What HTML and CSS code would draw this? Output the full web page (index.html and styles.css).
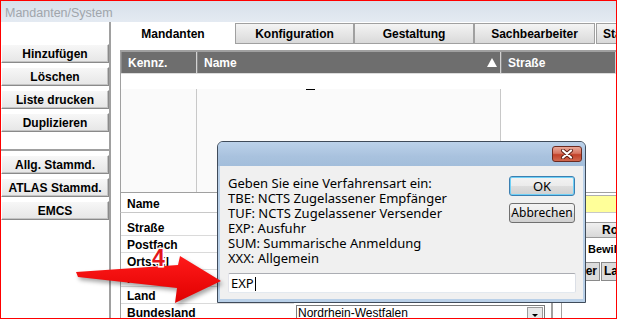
FILE: index.html
```html
<!DOCTYPE html>
<html lang="de">
  <head>
    <meta charset="UTF-8" />
    <title>Mandanten/System</title>
    <link rel="stylesheet" href="styles.css">
  </head>
  <body>
    <div class="window">
      <div class="titlebar">Mandanten/System</div>
      <div class="main">
        <div class="sidebar">
          <div class="side-btn">Hinzufügen</div>
          <div class="side-btn">Löschen</div>
          <div class="side-btn">Liste drucken</div>
          <div class="side-btn">Duplizieren</div>
          <div class="side-sep"></div>
          <div class="side-btn">Allg. Stammd.</div>
          <div class="side-btn">ATLAS Stammd.</div>
          <div class="side-btn">EMCS</div>
        </div>
        <div class="content">
          <div class="tabs">
            <div class="tab active">Mandanten</div>
            <div class="tab w119">Konfiguration</div>
            <div class="tab w120">Gestaltung</div>
            <div class="tab w121">Sachbearbeiter</div>
            <div class="tab tab-cut">Stammdaten</div>
          </div>
          <div class="page">
            <div class="grid">
              <div class="grid-head">
                <div class="gh">Kennz.</div>
                <div class="gh">Name <span class="sort"></span></div>
                <div class="gh">Straße</div>
              </div>
              <div class="grid-new"></div>
              <div class="grid-body">
                <div class="gc"></div>
                <div class="gc"><span class="dash"></span></div>
                <div class="gc"></div>
              </div>
            </div>
            <div class="name-row">
              <div class="lbl name-lbl">Name</div>
              <div class="name-field"></div>
            </div>
            <div class="detail">
              <div class="labels">
                <div class="lbl">Straße</div>
                <div class="lbl">Postfach</div>
                <div class="lbl">Ortsteil</div>
                <div class="lbl">PLZ</div>
                <div class="lbl">Land</div>
                <div class="lbl">Bundesland</div>
              </div>
              <div class="fields">
                <div class="combo">
                  <span class="combo-text">Nordrhein-Westfalen</span>
                  <span class="combo-btn"><span class="combo-arrow"></span></span>
                </div>
              </div>
              <div class="extra">
                <div class="ro-btn">Rollen</div>
                <div class="bew">Bewilligungen</div>
                <div class="subtabs">
                  <div class="subtab first">Inhaber</div>
                  <div class="subtab">Lager</div>
                </div>
              </div>
            </div>
          </div>
        </div>
      </div>

      <div class="dialog">
        <div class="dlg-title">
          <div class="dlg-close">
            <svg width="14" height="10" viewBox="0 0 14 10">
              <path d="M3 1.5 L11 8.5 M11 1.5 L3 8.5" stroke="#5a1d14" stroke-width="4" stroke-linecap="round"/>
              <path d="M3 1.5 L11 8.5 M11 1.5 L3 8.5" stroke="#fff" stroke-width="2.2" stroke-linecap="round"/>
            </svg>
          </div>
        </div>
        <div class="dlg-body">
          <div class="dlg-top">
            <div class="dlg-text">
              <div>Geben Sie eine Verfahrensart ein:</div>
              <div>TBE: NCTS Zugelassener Empfänger</div>
              <div>TUF: NCTS Zugelassener Versender</div>
              <div>EXP: Ausfuhr</div>
              <div>SUM: Summarische Anmeldung</div>
              <div>XXX: Allgemein</div>
            </div>
            <div class="dlg-buttons">
              <div class="dlg-btn default">OK</div>
              <div class="dlg-btn">Abbrechen</div>
            </div>
          </div>
          <div class="dlg-input">EXP<span class="caret"></span></div>
        </div>
      </div>

      <svg class="overlay" width="617" height="319" viewBox="0 0 617 319">
        <defs>
          <linearGradient id="arrowFill" x1="0" y1="0" x2="0" y2="1">
            <stop offset="0" stop-color="#ff1a1a"/>
            <stop offset="1" stop-color="#e00000"/>
          </linearGradient>
        </defs>
        <polygon class="arrow" points="76,272 178,265 180,256 221,281 175,303 177,288 78,277" fill="url(#arrowFill)"/>
        <text class="step" x="152" y="266">4</text>
      </svg>
    </div>
  </body>
</html>
```

FILE: styles.css
```css
* {
  box-sizing: border-box;
}
body {
  margin: 0;
  background: #fff;
  font-family: "Liberation Sans", Arial, sans-serif;
}
.window {
  position: relative;
  width: 617px;
  height: 319px;
  border: 1px solid #ff0000;
  overflow: hidden;
  background: #fff;
}
.titlebar {
  height: 21px;
  padding: 3px 0 0 4px;
  line-height: 18px;
  font-size: 12.5px;
  color: #a0a5ab;
  background: linear-gradient(#d7e0ea, #e4eaf2);
}
.main {
  display: flex;
  height: 296px;
}

/* left button column */
.sidebar {
  flex: none;
  width: 110px;
  padding-top: 22px;
  border-right: 2px solid #a0a0a0;
}
.side-btn {
  height: 19px;
  margin-bottom: 4px;
  padding-top: 1px;
  line-height: 16px;
  text-align: center;
  font-weight: bold;
  font-size: 12px;
  white-space: nowrap;
  color: #000;
  background: linear-gradient(#f7f7f7, #e6e6e6);
  border: 1px solid;
  border-color: #fff #8a8a8a #8a8a8a #fff;
  box-shadow: inset -1px -1px 0 #c4c4c4;
}
.side-sep {
  height: 2px;
  margin: 17px 0 4px;
  background: #a0a0a0;
}

/* tabs */
.content {
  flex: 1;
  min-width: 0;
  overflow: hidden;
  display: flex;
  flex-direction: column;
}
.tabs {
  display: flex;
  height: 22px;
  padding-top: 1px;
}
.tab {
  flex: none;
  height: 21px;
  padding-top: 2px;
  line-height: 17px;
  text-align: center;
  font-weight: bold;
  font-size: 12px;
  white-space: nowrap;
  overflow: hidden;
  border: 1px solid #a0a0a0;
  background: linear-gradient(#f4f4f4, #d9d9d9);
}
.tab.active {
  width: 124px;
  border-color: #fff;
  background: #fff;
}
.w119 { width: 119px; }
.w120 { width: 120px; }
.w121 { width: 121px; }
.tab-cut {
  width: 40px;
  margin-left: 1px;
  text-align: left;
  padding-left: 6px;
}

/* list grid */
.page {
  flex: 1;
  padding: 6px 0 0 9px;
}
.grid {
  height: 143px;
  display: flex;
  flex-direction: column;
  border-top: 2px solid #a0a0a0;
  border-left: 1px solid #a0a0a0;
  border-bottom: 1px solid #a0a0a0;
}
.grid-head,
.grid-body {
  display: grid;
  grid-template-columns: 76px 304px 1fr;
}
.grid-head {
  height: 21px;
  background: #6e6e6e;
}
.gh {
  display: flex;
  align-items: center;
  padding-left: 6px;
  color: #fff;
  font-weight: bold;
  font-size: 12px;
  white-space: nowrap;
  border-right: 1px solid #d2d2d2;
  border-left: 1px solid #888;
}
.sort {
  margin-left: auto;
  margin-right: 3px;
  width: 0;
  height: 0;
  border-left: 5px solid transparent;
  border-right: 5px solid transparent;
  border-bottom: 9px solid #fff;
}
.grid-new {
  height: 16px;
  border-top: 1px solid #dcdcdc;
  background: #fff;
}
.grid-body {
  flex: 1;
  background: #fafafa;
}
.gc {
  position: relative;
  border-right: 1px solid #c8c8c8;
}
.gc:last-child {
  border-right: none;
  background: #fff;
}
.dash {
  position: absolute;
  left: 109px;
  top: 0;
  width: 9px;
  height: 1px;
  background: #000;
}

/* detail form */
.lbl {
  height: 17px;
  padding-left: 6px;
  line-height: 18px;
  font-weight: bold;
  font-size: 12px;
  white-space: nowrap;
  border-bottom: 1px solid #dadada;
}
.name-row {
  display: flex;
  height: 20px;
  border-left: 1px solid #a0a0a0;
  border-bottom: 1px solid #c8c8c8;
}
.name-lbl {
  flex: none;
  width: 174px;
  height: 19px;
  line-height: 22px;
  border-bottom: none;
}
.name-field {
  flex: 1;
  margin-top: 2px;
  border-top: 1px solid #b0b0b0;
  background: #ffff99;
}
.detail {
  display: flex;
  height: 106px;
}
.labels {
  flex: none;
  width: 174px;
  padding-top: 6px;
  border-left: 1px solid #a0a0a0;
}
.fields {
  flex: none;
  width: 258px;
  margin-left: 1px;
  border-right: 2px solid #a0a0a0;
}
.combo {
  display: flex;
  height: 17px;
  margin: 92px 6px 0 1px;
  border: 1px solid #7a7a7a;
  background: #fff;
}
.combo-text {
  flex: 1;
  padding-left: 1px;
  font-size: 12px;
  line-height: 15px;
  white-space: nowrap;
}
.combo-btn {
  width: 16px;
  margin: 1px;
  display: flex;
  align-items: flex-end;
  justify-content: center;
  border: 1px solid #9a9a9a;
  background: #e8e8e8;
}
.combo-arrow {
  width: 0;
  height: 0;
  margin-bottom: 2px;
  border-left: 3px solid transparent;
  border-right: 3px solid transparent;
  border-top: 3px solid #000;
}
.extra {
  flex: 1;
  min-width: 0;
  margin-left: 8px;
  border-left: 1px solid #a0a0a0;
}
.ro-btn {
  height: 16px;
  margin-top: 9px;
  padding-left: 39px;
  line-height: 14px;
  font-weight: bold;
  font-size: 12px;
  white-space: nowrap;
  overflow: hidden;
  border: 1px solid #9a9a9a;
  border-right: none;
  background: linear-gradient(#f0f0f0, #d8d8d8);
}
.bew {
  height: 15px;
  margin-top: 4px;
  padding-left: 26px;
  line-height: 15px;
  font-weight: bold;
  font-size: 11px;
  white-space: nowrap;
  overflow: hidden;
}
.subtabs {
  display: flex;
  height: 19px;
  margin-top: 5px;
}
.subtab {
  flex: none;
  padding: 0 2px;
  line-height: 17px;
  font-weight: bold;
  font-size: 12px;
  white-space: nowrap;
  border: 1px solid #8a8a8a;
  background: #dcdcdc;
}
.subtab.first {
  width: 38px;
  margin-right: 1px;
  direction: rtl;
  overflow: hidden;
  text-align: right;
}

/* input dialog */
.dialog {
  position: absolute;
  left: 216px;
  top: 140px;
  width: 369px;
  height: 162px;
  display: flex;
  flex-direction: column;
  border: 1px solid #3f4b5a;
  border-radius: 6px 6px 0 0;
  background: #b9d0e8;
  font-family: "Noto Sans", sans-serif;
  font-size: 13px;
}
.dlg-title {
  height: 24px;
  flex: none;
  display: flex;
  justify-content: flex-end;
  padding: 4px 3px 0 0;
  border-radius: 5px 5px 0 0;
  background: linear-gradient(#bcd2ea, #a9c2de 60%, #a3bedb);
}
.dlg-close {
  width: 30px;
  height: 16px;
  display: flex;
  align-items: center;
  justify-content: center;
  border: 1px solid #6b2a20;
  border-radius: 3px;
  background: linear-gradient(#e9a899, #d77561 45%, #c24129 55%, #d0684f);
}
.dlg-body {
  flex: 1;
  margin: 0 2px 3px;
  padding: 10px 8px 0 8px;
  background: #f0f0f0;
}
.dlg-top {
  display: flex;
}
.dlg-text {
  flex: 1;
  line-height: 15px;
  color: #000;
}
.dlg-buttons {
  width: 66px;
}
.dlg-btn {
  height: 20px;
  margin-bottom: 7px;
  line-height: 18px;
  text-align: center;
  font-size: 12px;
  border: 1px solid #707070;
  border-radius: 3px;
  background: linear-gradient(#f3f3f3, #ebebeb 50%, #dddddd 50%, #d0d0d0);
}
.dlg-btn.default {
  border-color: #3c7fb1;
  box-shadow: inset 0 0 0 1px #6fd0f6;
  font-size: 13px;
}
.dlg-input {
  height: 20px;
  margin: 7px -1px 0 0;
  padding-left: 2px;
  line-height: 18px;
  background: #fff;
  border: 1px solid;
  border-color: #abadb3 #dbdfe6 #e3e9ef #e2e3ea;
  border-radius: 2px;
}
.caret {
  display: inline-block;
  width: 1px;
  height: 14px;
  margin-left: 1px;
  vertical-align: -3px;
  background: #000;
}

/* annotation arrow */
.overlay {
  position: absolute;
  left: -1px;
  top: -1px;
  pointer-events: none;
}
.arrow {
  filter: drop-shadow(2px 3px 2px rgba(0, 0, 0, 0.35));
}
.step {
  font-family: "Liberation Sans", Arial, sans-serif;
  font-weight: bold;
  font-size: 23px;
  fill: #e3161b;
  stroke: #fff;
  stroke-width: 3px;
  paint-order: stroke;
}
```
